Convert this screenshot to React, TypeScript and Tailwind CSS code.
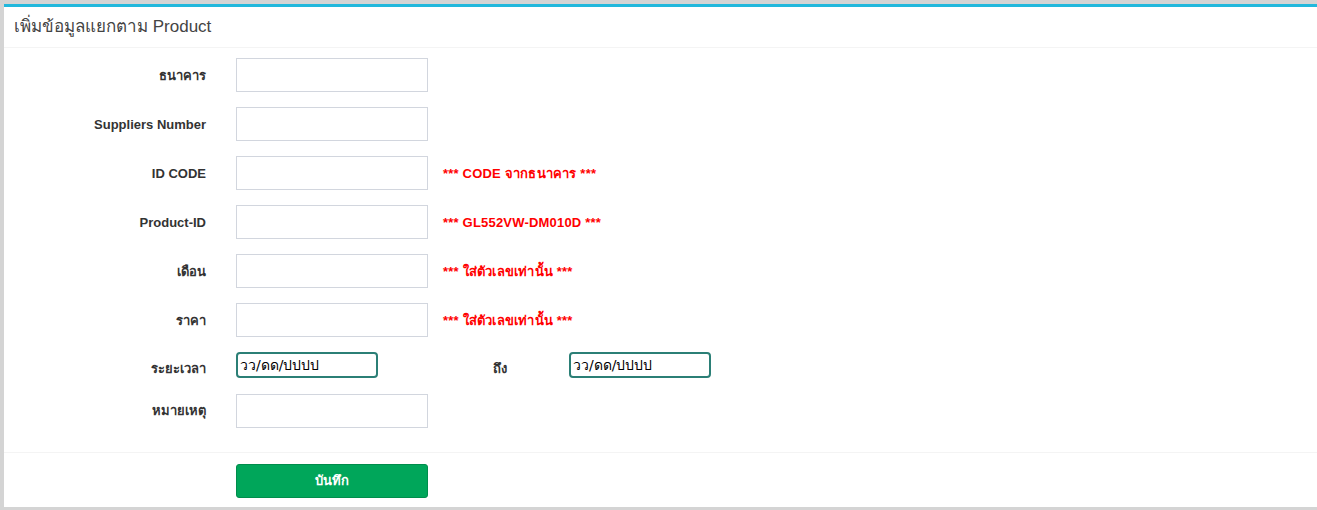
import React from "react";

const rows = [
  { label: "ธนาคาร", note: "" },
  { label: "Suppliers Number", note: "" },
  { label: "ID CODE", note: "*** CODE จากธนาคาร ***" },
  { label: "Product-ID", note: "*** GL552VW-DM010D ***" },
  { label: "เดือน", note: "*** ใส่ตัวเลขเท่านั้น ***" },
  { label: "ราคา", note: "*** ใส่ตัวเลขเท่านั้น ***" },
];

const DateInput = () => (
  <div className="w-[142px] h-[26px] border-2 border-[#2b7f76] rounded-[4px] flex items-center pl-[2px] text-[14px] text-black font-['Tahoma','DejaVu_Sans',sans-serif]">
    วว/ดด/ปปปป
  </div>
);

export default function App() {
  return (
    <div className="w-[1317px] h-[510px] bg-[#d4d4d4] pt-[4px] pl-[4px] font-['Liberation_Sans','Noto_Sans',sans-serif] overflow-hidden">
      <div className="bg-white border-t-[3px] border-[#22b8dc] h-[503px]">
        <div className="h-[41px] border-b border-[#f4f4f4] flex items-center pl-[10px]">
          <h3 className="text-[17px] text-[#444]">เพิ่มข้อมูลแยกตาม Product</h3>
        </div>
        <div className="pt-[10px] pb-[24px] flex flex-col">
          {rows.map((r, i) => (
            <div key={i} className={`flex items-center ${i > 0 ? "mt-[15px]" : ""}`}>
              <label className="w-[202px] text-right text-[13px] font-bold text-[#333] mt-[1px]">
                {r.label}
              </label>
              <input className="ml-[30px] w-[192px] h-[34px] border border-[#d2d6de] outline-none" />
              {r.note && (
                <span className="ml-[15px] text-[13px] font-bold text-[#f00] tracking-[0.2px] mt-[1px]">{r.note}</span>
              )}
            </div>
          ))}
          <div className="flex items-center mt-[15px] h-[26px]">
            <label className="w-[202px] text-right text-[13px] font-bold text-[#333] mt-[8px]">ระยะเวลา</label>
            <div className="ml-[30px]">
              <DateInput />
            </div>
            <label className="w-[129px] text-right text-[13px] font-bold text-[#333] mt-[8px]">ถึง</label>
            <div className="ml-[62px]">
              <DateInput />
            </div>
          </div>
          <div className="flex items-center mt-[16px]">
            <label className="w-[202px] text-right text-[13px] font-bold text-[#333]">หมายเหตุ</label>
            <input className="ml-[30px] w-[192px] h-[34px] border border-[#d2d6de] outline-none" />
          </div>
        </div>
        <div className="border-t border-[#f4f4f4] pt-[11px] pl-[232px]">
          <button className="w-[192px] h-[34px] bg-[#00a65a] border border-[#008d4c] rounded-[3px] text-white text-[13px] font-bold">
            บันทึก
          </button>
        </div>
      </div>
    </div>
  );
}
